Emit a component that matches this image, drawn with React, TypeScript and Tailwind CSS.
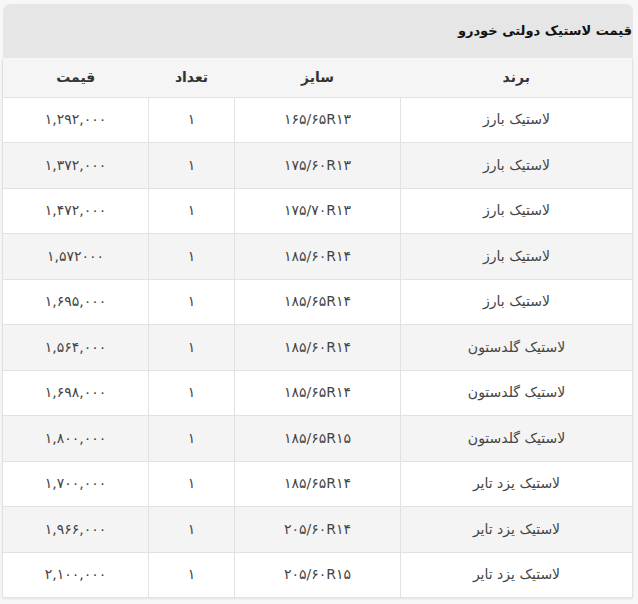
import React from "react";

const rows: [string, string, string, string][] = [
  ["لاستیک بارز", "۱۶۵/۶۵R۱۳", "۱", "۱,۲۹۲,۰۰۰"],
  ["لاستیک بارز", "۱۷۵/۶۰R۱۳", "۱", "۱,۳۷۲,۰۰۰"],
  ["لاستیک بارز", "۱۷۵/۷۰R۱۳", "۱", "۱,۴۷۲,۰۰۰"],
  ["لاستیک بارز", "۱۸۵/۶۰R۱۴", "۱", "۱,۵۷۲۰۰۰"],
  ["لاستیک بارز", "۱۸۵/۶۵R۱۴", "۱", "۱,۶۹۵,۰۰۰"],
  ["لاستیک گلدستون", "۱۸۵/۶۰R۱۴", "۱", "۱,۵۶۴,۰۰۰"],
  ["لاستیک گلدستون", "۱۸۵/۶۵R۱۴", "۱", "۱,۶۹۸,۰۰۰"],
  ["لاستیک گلدستون", "۱۸۵/۶۵R۱۵", "۱", "۱,۸۰۰,۰۰۰"],
  ["لاستیک یزد تایر", "۱۸۵/۶۵R۱۴", "۱", "۱,۷۰۰,۰۰۰"],
  ["لاستیک یزد تایر", "۲۰۵/۶۰R۱۴", "۱", "۱,۹۶۶,۰۰۰"],
  ["لاستیک یزد تایر", "۲۰۵/۶۰R۱۵", "۱", "۲,۱۰۰,۰۰۰"],
];

export default function App() {
  return (
    <div
      className="min-h-[604px] w-[638px] bg-[#f7f7f7] pt-[4px] pl-[3px] pr-[5px]"
      style={{ fontFamily: '"DejaVu Sans", Tahoma, sans-serif' }}
      dir="rtl"
    >
      <div className="w-[630px]">
        <div className="h-[54px] rounded-t-[7px] bg-[#e6e6e6] flex items-center pr-[1px] mb-[1px]">
          <span className="text-[13px] font-bold text-[#111]">قیمت لاستیک دولتی خودرو</span>
        </div>
        <table className="w-[630px] border-collapse table-fixed bg-white text-[14px] text-[#444] shadow-[0_1px_2px_rgba(0,0,0,0.08)]">
          <colgroup>
            <col className="w-[232px]" />
            <col className="w-[166px]" />
            <col className="w-[86px]" />
            <col className="w-[146px]" />
          </colgroup>
          <thead>
            <tr className="h-[38px] bg-[#f5f5f5] border-b border-b-[#8f8f8f]">
              <th className="font-bold text-[#333] border-r border-r-[#e2e2e2] text-center">برند</th>
              <th className="font-bold text-[#333] text-center">سایز</th>
              <th className="font-bold text-[#333] text-center">تعداد</th>
              <th className="font-bold text-[#333] border-l border-l-[#e2e2e2] text-center">قیمت</th>
            </tr>
          </thead>
          <tbody>
            {rows.map((r, i) => (
              <tr key={i} className={`h-[45.5px] ${i % 2 === 1 ? "bg-[#f4f4f4]" : "bg-white"}`}>
                <td className="border border-[#e2e2e2] text-center">{r[0]}</td>
                <td className="border border-[#e2e2e2] text-center" dir="ltr">{r[1]}</td>
                <td className="border border-[#e2e2e2] text-center" dir="ltr">{r[2]}</td>
                <td className="border border-[#e2e2e2] text-center" dir="ltr">{r[3]}</td>
              </tr>
            ))}
          </tbody>
        </table>
      </div>
    </div>
  );
}
